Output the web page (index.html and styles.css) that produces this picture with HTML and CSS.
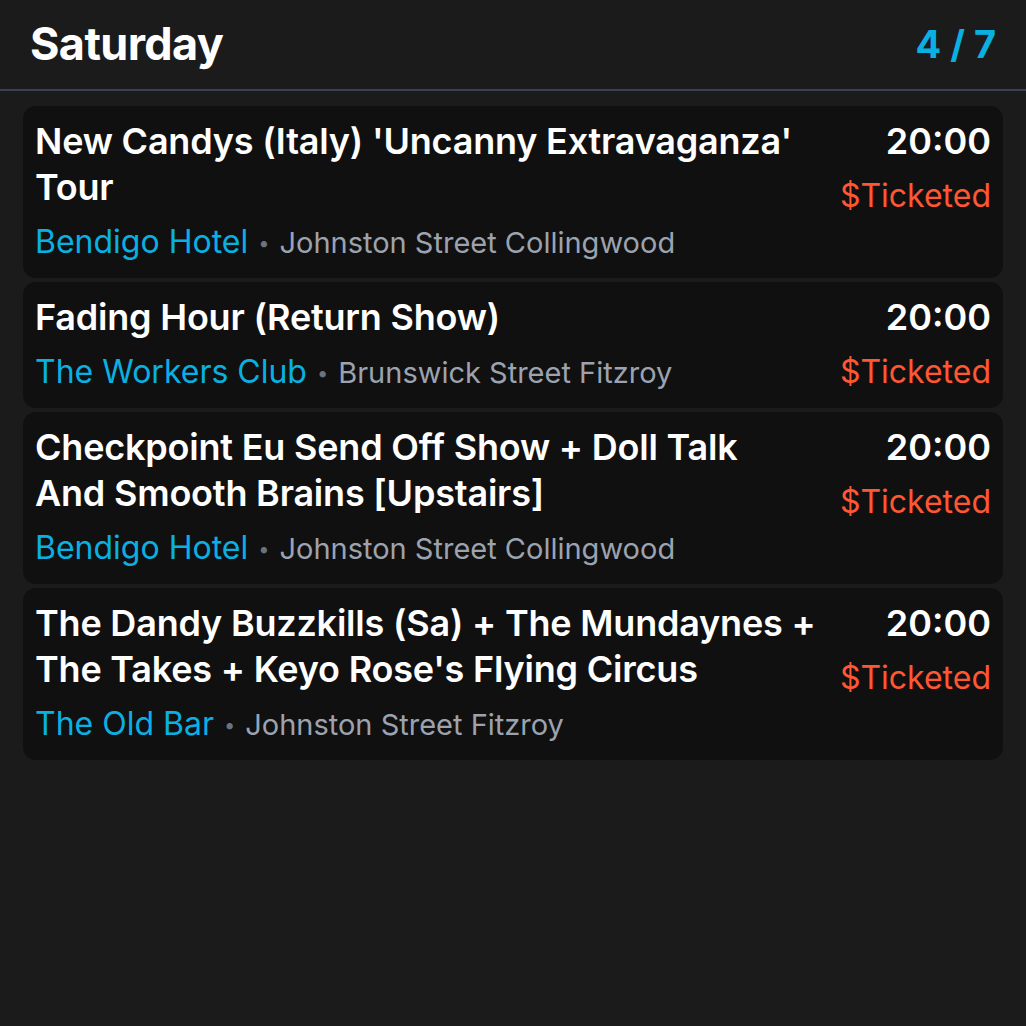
FILE: index.html
```html
<!DOCTYPE html>
<html lang="en">
<head>
<meta charset="utf-8">
<title>Saturday</title>
<link rel="stylesheet" href="styles.css">
</head>
<body>
<div class="screen">
  <header class="day-header">
    <h1 class="day-title">Saturday</h1>
    <div class="day-count">4 / 7</div>
  </header>
  <ul class="gig-list">
    <li class="gig">
      <div class="gig-main">
        <div class="gig-title">New Candys (Italy) 'Uncanny Extravaganza' Tour</div>
        <div class="gig-venue"><span class="venue-name">Bendigo Hotel</span><span class="venue-sep">•</span><span class="venue-addr">Johnston Street Collingwood</span></div>
      </div>
      <div class="gig-side">
        <div class="gig-time">20:00</div>
        <div class="gig-price">$Ticketed</div>
      </div>
    </li>
    <li class="gig">
      <div class="gig-main">
        <div class="gig-title">Fading Hour (Return Show)</div>
        <div class="gig-venue"><span class="venue-name">The Workers Club</span><span class="venue-sep">•</span><span class="venue-addr">Brunswick Street Fitzroy</span></div>
      </div>
      <div class="gig-side">
        <div class="gig-time">20:00</div>
        <div class="gig-price">$Ticketed</div>
      </div>
    </li>
    <li class="gig">
      <div class="gig-main">
        <div class="gig-title">Checkpoint Eu Send Off Show + Doll Talk<br>And Smooth Brains [Upstairs]</div>
        <div class="gig-venue"><span class="venue-name">Bendigo Hotel</span><span class="venue-sep">•</span><span class="venue-addr">Johnston Street Collingwood</span></div>
      </div>
      <div class="gig-side">
        <div class="gig-time">20:00</div>
        <div class="gig-price">$Ticketed</div>
      </div>
    </li>
    <li class="gig">
      <div class="gig-main">
        <div class="gig-title">The Dandy Buzzkills (Sa) + The Mundaynes + The Takes + Keyo Rose's Flying Circus</div>
        <div class="gig-venue"><span class="venue-name">The Old Bar</span><span class="venue-sep">•</span><span class="venue-addr">Johnston Street Fitzroy</span></div>
      </div>
      <div class="gig-side">
        <div class="gig-time">20:00</div>
        <div class="gig-price">$Ticketed</div>
      </div>
    </li>
  </ul>
</div>
</body>
</html>
```
FILE: styles.css
```css
* { box-sizing: border-box; }
html, body {
  margin: 0;
  padding: 0;
  background: #1b1b1b;
}
body {
  font-family: Inter, "Noto Sans", "Liberation Sans", sans-serif;
  color: #ffffff;
  width: 1026px;
  height: 1026px;
  overflow: hidden;
}
.screen {
  display: flex;
  flex-direction: column;
}
.day-header {
  display: flex;
  align-items: center;
  justify-content: space-between;
  padding: 16px 30px 17px 30px;
  border-bottom: 2px solid #374151;
}
.day-title {
  margin: 0;
  font-size: 45px;
  line-height: 56px;
  font-weight: 700;
  letter-spacing: -0.6px;
}
.day-count {
  font-size: 38px;
  line-height: 56px;
  font-weight: 700;
  color: #0ab0e2;
}
.gig-list {
  list-style: none;
  margin: 0;
  padding: 15px 23px;
  display: flex;
  flex-direction: column;
  gap: 4px;
}
.gig {
  display: flex;
  gap: 10px;
  background: #101010;
  border-radius: 13px;
  padding: 12px;
}
.gig-main {
  flex: 1;
  min-width: 0;
}
.gig-title {
  font-size: 36px;
  line-height: 46px;
  font-weight: 600;
  letter-spacing: -0.2px;
}
.gig-venue {
  margin-top: 8px;
  font-size: 32px;
  line-height: 48px;
}
.venue-name {
  line-height: 1;
  color: #0ab0e2;
}
.venue-sep {
  line-height: 1;
  font-size: 20px;
  color: #6b7280;
  margin: 0 10px;
  vertical-align: 3px;
}
.venue-addr {
  line-height: 1;
  font-size: 29px;
  color: #9ca3af;
}
.gig-side {
  flex-shrink: 0;
  display: flex;
  flex-direction: column;
  align-items: flex-end;
}
.gig-time {
  font-size: 36px;
  line-height: 46px;
  font-weight: 600;
}
.gig-price {
  margin-top: 8px;
  font-size: 32px;
  line-height: 48px;
  color: #ff5733;
}
```
